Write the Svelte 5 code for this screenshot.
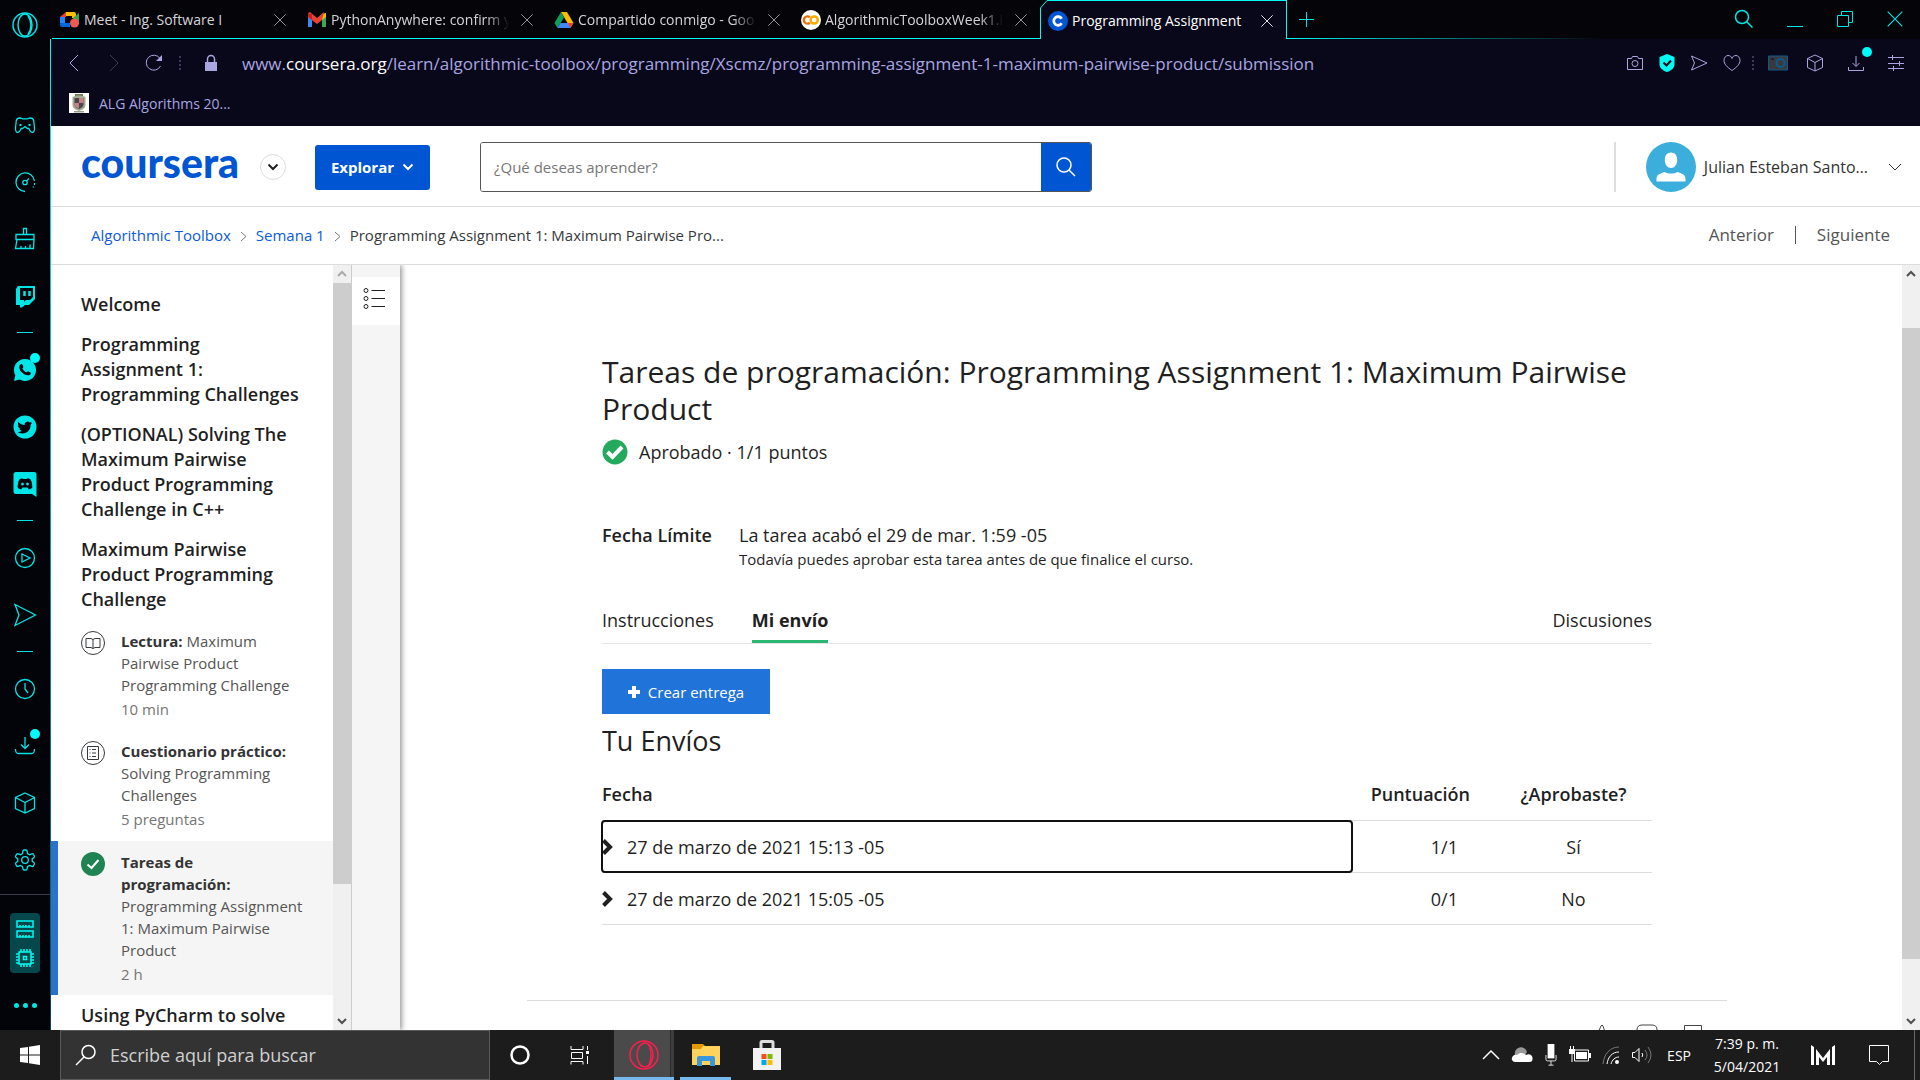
<script>
  const tabs = [
    { icon: 'meet', title: 'Meet - Ing. Software I' },
    { icon: 'gmail', title: 'PythonAnywhere: confirm y', fade: true },
    { icon: 'drive', title: 'Compartido conmigo - Goo', fade: true },
    { icon: 'colab', title: 'AlgorithmicToolboxWeek1.i', fade: true },
    { icon: 'coursera', title: 'Programming Assignment', active: true }
  ];

  const rail = ['gamepad', 'gauge', 'brush', 'twitch', '-', 'whatsapp', 'twitter', 'discord', '-', 'player', 'send', '-', 'clock', 'download', 'cube', 'gear'];

  const lessons = [
    'Welcome',
    'Programming Assignment 1: Programming Challenges',
    '(OPTIONAL) Solving The Maximum Pairwise Product Programming Challenge in C++',
    'Maximum Pairwise Product Programming Challenge'
  ];

  const items = [
    { icon: 'book', kind: 'Lectura:', name: 'Maximum Pairwise Product Programming Challenge', meta: '10 min' },
    { icon: 'quiz', kind: 'Cuestionario práctico:', name: 'Solving Programming Challenges', meta: '5 preguntas' },
    { icon: 'done', kind: 'Tareas de programación:', name: 'Programming Assignment 1: Maximum Pairwise Product', meta: '2 h', active: true }
  ];

  const rows = [
    { date: '27 de marzo de 2021 15:13 -05', score: '1/1', passed: 'Sí', focus: true },
    { date: '27 de marzo de 2021 15:05 -05', score: '0/1', passed: 'No' }
  ];
</script>

{#snippet favicon(name)}
  <svg width="20" height="20" viewBox="0 0 20 20">
    {#if name === 'meet'}
      <path d="M6 2h8a2 2 0 0 1 2 2v4h-4V6H6z" fill="#fbbc04" />
      <path d="M6 2v5H0z" fill="#ea4335" />
      <path d="M0 7h5v7H0z" fill="#2684fc" />
      <path d="M0 13h10v4H2a2 2 0 0 1-2-2z" fill="#0066da" />
      <path d="M13 8l6-5v11l-6-3z" fill="#34a853" />
      <circle cx="14.500" cy="13" r="4.500" fill="#ee5a52" />
    {:else if name === 'gmail'}
      <path d="M1 5v12h4V8z" fill="#4285f4" />
      <path d="M19 5v12h-4V8z" fill="#34a853" />
      <path d="M15 4l4-1v4l-4 3z" fill="#fbbc04" />
      <path d="M1 3l2-1 7 6 7-6-2 8-5 4-9-7z" fill="#ea4335" />
      <path d="M1 3v4l4 3V4z" fill="#c5221f" />
    {:else if name === 'drive'}
      <path d="M7 2h6l6.500 11h-6z" fill="#fbbc04" />
      <path d="M7 2l3 5.500L3.500 18 .5 13z" fill="#0f9d58" />
      <path d="M6.500 13h13l-3 5h-13z" fill="#4285f4" />
      <path d="M13.500 13h6l-3 5z" fill="#ea4335" />
    {:else if name === 'colab'}
      <circle cx="10" cy="10" r="10" fill="#fff" />
      <g fill="none" stroke-width="2.500">
        <path d="M8.800 7.300a3.600 3.600 0 1 0 0 5.400" stroke="#e8710a" />
        <circle cx="13.200" cy="10" r="3.600" stroke="#f9ab00" />
      </g>
    {:else}
      <circle cx="10" cy="10" r="10" fill="#0056d2" />
      <path d="M13.700 7.700a4.300 4.300 0 1 0 0 4.600" fill="none" stroke="#fff" stroke-width="2.800" />
    {/if}
  </svg>
{/snippet}

{#snippet cross(size)}
  <svg width={size} height={size} viewBox="0 0 16 16" class="line"><path d="M1.500 1.500l13 13M14.500 1.500l-13 13" /></svg>
{/snippet}

{#snippet railIcon(name)}
  <svg width="24" height="24" viewBox="0 0 24 24" class="line">
    {#if name === 'gamepad'}
      <path d="M7 5c-2 0-3.300.8-3.700 2.500L2.500 15c-.2 2.800.8 4.500 2.300 4.500 1.700 0 2.200-1.800 3.400-4h1.300l2.500-2 2.500 2h1.300c1.200 2.200 1.700 4 3.400 4 1.500 0 2.500-1.700 2.300-4.500l-.8-7.500C20.300 5.800 19 5 17 5c-1.500 0-1.600.8-2.400.8H9.400C8.600 5.800 8.500 5 7 5z" />
      <path d="M6.500 12h2M15.500 12h2" stroke-width="2" />
    {:else if name === 'gauge'}
      <path d="M12 21.500A9.300 9.300 0 1 1 21.500 11M21.500 13v2M20.500 16.500l-.6 1" /><circle cx="12" cy="12.500" r="2.200" /><path d="M13.600 10.900l2.400-2.400" />
    {:else if name === 'brush'}
      <path d="M3 7.500h18v5H3zM10.500 7.500V1.500h3v6M4 12.500L2.500 21.500h18l.5-9M8 21.500V19M12.500 21.500V19M17 21.500v-4" />
    {:else if name === 'twitch'}
      <path d="M3 5l2-3h17v13l-6 6h-4l-3 2.500H7V21H3zM7 4v12h4v2l2-2h4l3-3V4z" fill-rule="evenodd" class="fill" /><path d="M11.500 7v5M16.500 7v5" stroke-width="2.500" />
    {:else if name === 'whatsapp'}
      <path d="M12 1A11 11 0 0 0 2.300 17.300L1 23l5.700-1.400A11 11 0 1 0 12 1z" class="fill" />
      <path d="M7.500 6.500c1-.8 1.700-.5 2.100.5l.7 1.700c.2.600-.7 1.300-1 1.800 1 2 2.400 3.200 4.300 4.100.6-.5 1.200-1.500 1.800-1.200l2 1c.8.500.2 1.800-.8 2.500-2 1.200-5.500-.2-7.800-2.600C6.500 12 5.300 8.500 7.500 6.500z" class="ink" />
    {:else if name === 'twitter'}
      <circle cx="12" cy="12" r="11.500" class="fill" />
      <path d="M19 7.800c-.6.300-1.100.4-1.700.5.600-.4 1-.9 1.200-1.600-.6.300-1.200.6-1.900.7a3 3 0 0 0-5 2.700c-2.500-.1-4.700-1.300-6.200-3.100-.8 1.400-.4 3.100.9 4-.5 0-.9-.1-1.300-.4 0 1.400 1 2.700 2.400 3-.4.100-.9.100-1.300 0 .4 1.200 1.500 2 2.800 2.100A6 6 0 0 1 4.500 17c4 2.500 9.500 1.700 12-2.500.8-1.400 1.100-2.800 1.100-4.800.5-.5 1-1.100 1.400-1.900z" class="ink" />
    {:else if name === 'discord'}
      <path d="M3 0h18a2.500 2.500 0 0 1 2.500 2.500V25L19 22H3A2.500 2.500 0 0 1 .5 19.500v-17A2.500 2.500 0 0 1 3 0z" class="fill" />
      <path d="M8 6.500c1.500-.4 1.500.5 4 .5s2.500-.9 4-.5c2.200.8 3.300 4.500 3.300 9-1 1.500-3 2-3.800 1.500l-1-1.500h-5l-1 1.500c-.8.500-2.800 0-3.800-1.500 0-4.500 1.100-8.200 3.300-9z" class="ink" />
      <ellipse cx="9.500" cy="12" rx="1.400" ry="1.600" class="fill" /><ellipse cx="14.500" cy="12" rx="1.400" ry="1.600" class="fill" />
    {:else if name === 'player'}
      <circle cx="12" cy="12" r="9.500" /><path d="M9 8v8l8-4z" />
    {:else if name === 'send'}
      <path d="M2 1.500l20.500 10.500L2 22.500l4-10.500z" />
    {:else if name === 'clock'}
      <circle cx="12" cy="12" r="9.500" /><path d="M12 6v6l3 4" />
    {:else if name === 'download'}
      <path d="M12 3v11M8 10.500l4 4 4-4M2.500 15c0 4 1 4.500 3 4.500h13c2 0 3-.5 3-4.500" />
    {:else if name === 'cube'}
      <path d="M12 2l9.500 4.500v11L12 22l-9.500-4.500v-11zM2.500 6.500L12 11.500l9.500-5M12 11.500V22" />
    {:else if name === 'gear'}
      <path d="M10 3q0-1 1-1h2q1 0 1 1l.5 2.500 2 1.200 2.500-.9q1-.3 1.400.5l.9 1.600q.5.900-.3 1.600l-1.800 1.400v2.400l1.800 1.400q.8.700.3 1.600l-.9 1.600q-.5.800-1.400.5l-2.500-.9-2 1.200L14 21q0 1-1 1h-2q-1 0-1-1l-.5-2.300-2-1.200-2.500.9q-1 .3-1.400-.5l-.9-1.600q-.5-.9.300-1.600l1.800-1.400v-2.400L3 9.500q-.8-.7-.3-1.600l.9-1.600q.5-.8 1.400-.5l2.500.9 2-1.200z" /><circle cx="12" cy="12" r="3.300" />
    {/if}
  </svg>
{/snippet}

{#snippet caret(up)}
  <svg width="10" height="8" viewBox="0 0 10 8" class="line heavy"><path d={up ? 'M1 6l4-4 4 4' : 'M1 2l4 4 4-4'} /></svg>
{/snippet}

<div class="screen">
  <aside class="rail">
    <div class="opera">
      <svg width="26" height="26" viewBox="0 0 26 26" class="line thick"><circle cx="13" cy="13" r="12" /><ellipse cx="13" cy="13" rx="7" ry="11" /><path d="M16 4c4 5 4 13 0 18" /></svg>
    </div>
    {#each rail as name}
      {#if name === '-'}
        <div class="dash"></div>
      {:else}
        <button class="slot" aria-label={name}>
          {@render railIcon(name)}
          {#if name === 'whatsapp' || name === 'download'}<i class="dot"></i>{/if}
        </button>
      {/if}
    {/each}
    <div class="rail-end">
      <button class="limiter" aria-label="Limitadores">
        <svg width="20" height="20" viewBox="0 0 20 20" class="line thick"><path d="M2 2h16v6H2zM2 12h16v6H2zM5 8V6M8 8V6M11 8V6M14 8V6M5 18v-2M8 18v-2M11 18v-2M14 18v-2" /></svg>
        <svg width="20" height="20" viewBox="0 0 20 20" class="line thick"><path d="M4 4h12v12H4zM8.500 8.500h3v3h-3zM6 4V1M9 4V1M12 4V1M15 4V1M6 19v-3M9 19v-3M12 19v-3M15 19v-3M1 6h3M1 9h3M1 12h3M1 15h3M16 6h3M16 9h3M16 12h3M16 15h3" /></svg>
      </button>
      <button class="more" aria-label="Más"><i></i><i></i><i></i></button>
    </div>
  </aside>

  <div class="window">
    <div class="tabbar">
      <div class="tabs">
        {#each tabs as tab}
          <div class="tab" class:active={tab.active}>
            {#if tab.active}
              <svg class="edge" width="8" height="39" viewBox="0 0 8 39"><path d="M0 0h8L.5 7.500V39H0z" fill="#050509" /><path d="M8 .5h-1L.5 8v31" fill="none" stroke="#00fbf4" /></svg>
            {/if}
            {@render favicon(tab.icon)}
            <span class="tab-title" class:fade={tab.fade}>{tab.title}</span>
            <button class="tab-close" aria-label="Cerrar pestaña">{@render cross(14)}</button>
          </div>
        {/each}
      </div>
      <div class="tab-rest">
        <button aria-label="Nueva pestaña"><svg width="16" height="16" viewBox="0 0 16 16" class="line"><path d="M8.500 1v15M1 8.500h15" /></svg></button>
        <div class="win">
          <button aria-label="Buscar"><svg width="20" height="20" viewBox="0 0 20 20" class="line thick"><circle cx="8" cy="8" r="6.500" /><path d="M12.500 12.500l6 6" /></svg></button>
          <button aria-label="Minimizar"><svg width="18" height="18" viewBox="0 0 18 18" class="line"><path d="M1 16.500h16" /></svg></button>
          <button aria-label="Restaurar"><svg width="18" height="18" viewBox="0 0 18 18" class="line"><path d="M1.500 5.500h11v11h-11zM5.500 5.500v-4h11v11h-4" /></svg></button>
          <button aria-label="Cerrar">{@render cross(18)}</button>
        </div>
      </div>
    </div>

    <div class="nav">
      <div class="address">
        <button class="nb" aria-label="Atrás"><svg width="12" height="18" viewBox="0 0 12 18" class="line"><path d="M10 1L2 9l8 8" /></svg></button>
        <button class="nb dim" aria-label="Adelante"><svg width="12" height="18" viewBox="0 0 12 18" class="line"><path d="M2 1l8 8-8 8" /></svg></button>
        <button class="nb reload" aria-label="Recargar"><svg width="18" height="18" viewBox="0 0 18 18" class="line"><path d="M15.500 12A7.500 7.500 0 1 1 15 4.500" /><path d="M17 1v6h-6z" class="fill" /></svg></button>
        <i class="sep"></i>
        <svg class="lock" width="14" height="18" viewBox="0 0 14 18"><path d="M1 8h12v9H1z" fill="#a8a5e0" /><path d="M3.500 8V5a3.500 3.500 0 0 1 7 0v3" fill="none" stroke="#a8a5e0" stroke-width="1.500" /></svg>
        <div class="url">www.<b>coursera.org</b>/learn/algorithmic-toolbox/programming/Xscmz/programming-assignment-1-maximum-pairwise-product/submission</div>
        <div class="tools">
          <svg width="18" height="18" viewBox="0 0 18 18" class="line"><path d="M1.500 4.500h4l1-2h5l1 2h4v11h-15z" /><circle cx="9" cy="9.500" r="3" /></svg>
          <svg width="16" height="18" viewBox="0 0 16 18"><path d="M8 0l7.500 3v7c0 4-3 6.500-7.500 8C3.500 16.500.5 14 .5 10V3z" fill="#00fbf4" /><path d="M4.500 8.500l3 3 4.500-5" fill="none" stroke="#08081a" stroke-width="2" /></svg>
          <svg width="18" height="18" viewBox="0 0 18 18" class="line"><path d="M1.500 2L17 9 1.500 16l3-7z" /></svg>
          <svg width="18" height="18" viewBox="0 0 18 18" class="line"><path d="M9 16.500C4 13 1 10 1 6.500 1 3.500 3 1.500 5 1.500c2 0 3.500 1 4 3 .5-2 2-3 4-3s4 2 4 5c0 3.500-3 6.500-8 10z" /></svg>
          <i class="sep"></i>
          <svg width="20" height="16" viewBox="0 0 20 16"><path d="M.5 1h19v14H.5z" fill="#3a3a3c" stroke="#0d5a8c" /><circle cx="12.500" cy="8" r="4" fill="#3a3a3c" stroke="#0d5a8c" stroke-width="2" /><path d="M3 4h3" stroke="#15293c" stroke-width="2" /></svg>
          <svg width="18" height="18" viewBox="0 0 18 18" class="line"><path d="M9 1l7.500 3.500v9L9 17l-7.500-3.500v-9zM1.500 4.500L9 8.500l7.500-4M9 8.500V17" /></svg>
          <span class="badge"><svg width="18" height="18" viewBox="0 0 18 18" class="line"><path d="M9 2v10M5.500 9L9 12.500 12.500 9M1.500 13v3.500h15V13" /></svg><i class="dot"></i></span>
          <svg width="18" height="18" viewBox="0 0 18 18" class="line"><path d="M1 3.500h16M1 9.500h16M1 14.500h16M5.500 1v5M12.500 7v5M6.500 12v5" /></svg>
        </div>
      </div>
      <a class="bookmark" href="#bookmark">
        <svg width="20" height="20" viewBox="0 0 20 20"><path d="M0 0h20v20H0z" fill="#fff" /><path d="M6 1h8v3H6z" fill="#6f7d54" /><path d="M3.500 4c4-2 9-2 13 0v8c0 3-3 5-6.500 6-3.500-1-6.500-3-6.500-6z" fill="#a5aa90" /><path d="M5.500 5h9v6.500c0 2-2 3.500-4.500 4.500-2.500-1-4.500-2.500-4.500-4.500z" fill="#4a4650" /><path d="M10 5h4.500v5H10zM5.500 10H10v5.500c-2.500-1-4.500-2-4.500-4z" fill="#c98080" /><path d="M5 18h10v1.500H5z" fill="#9a9a8c" /></svg>
        ALG Algorithms 20...
      </a>
    </div>

    <header class="top">
      <a class="logo" href="#home">coursera</a>
      <button class="round" aria-label="Abrir menú"><svg width="12" height="8" viewBox="0 0 12 8" class="line heavy"><path d="M1.500 1.500L6 6l4.500-4.500" /></svg></button>
      <button class="explore">Explorar <svg width="12" height="8" viewBox="0 0 12 8" class="line heavy"><path d="M1.500 1.500L6 6l4.500-4.500" /></svg></button>
      <form class="search">
        <input type="text" placeholder="¿Qué deseas aprender?" aria-label="¿Qué deseas aprender?" />
        <button type="button" aria-label="Buscar"><svg width="20" height="20" viewBox="0 0 20 20" class="line thick"><circle cx="8" cy="8" r="7" /><path d="M13 13l6 6" /></svg></button>
      </form>
      <div class="user">
        <svg width="50" height="50" viewBox="0 0 50 50"><circle cx="25" cy="25" r="25" fill="#3caedb" /><path d="M25 10.500c4 0 6.200 3 6.200 7.500S28.500 26 25 26s-6.200-3.500-6.200-8 2.200-7.500 6.200-7.500zM10.500 39.500v-3c0-4 4-5 8-6.500 4 2 9 2 13 0 4 1.500 8 2.500 8 6.500v3z" fill="#fff" /></svg>
        <button class="name">Julian Esteban Santo… <svg width="14" height="8" viewBox="0 0 14 8" class="line"><path d="M1 1l6 6 6-6" /></svg></button>
      </div>
    </header>

    <nav class="crumbs">
      <a href="#course">Algorithmic Toolbox</a>
      <svg width="7" height="10" viewBox="0 0 7 10" class="line"><path d="M1 1l5 4.500L1 10" /></svg>
      <a href="#week">Semana 1</a>
      <svg width="7" height="10" viewBox="0 0 7 10" class="line"><path d="M1 1l5 4.500L1 10" /></svg>
      <span>Programming Assignment 1: Maximum Pairwise Pro...</span>
      <div class="pager"><a href="#prev">Anterior</a><i></i><a href="#next">Siguiente</a></div>
    </nav>

    <div class="body">
      <div class="outline">
        {#each lessons as title}<h3>{title}</h3>{/each}
        {#each items as item}
          <a class="item" class:current={item.active} href="#item">
            <svg width="24" height="24" viewBox="0 0 24 24" class="line">
              {#if item.icon === 'book'}
                <circle cx="12" cy="12" r="11.500" /><path d="M5 7.500h5l2 1 2-1h5v9h-5l-2 1-2-1H5zM12 8.500v9" />
              {:else if item.icon === 'quiz'}
                <circle cx="12" cy="12" r="11.500" /><path d="M6.500 5.500h11v13h-11zM11 8.500h4M11 12h4M11 15.500h4M8.500 8.500h1M8.500 12h1M8.500 15.500h1" />
              {:else}
                <circle cx="12" cy="12" r="12" fill="#1f8354" stroke="none" /><path d="M6.500 12.500l4 3.500L17.500 8" stroke="#fff" stroke-width="2" />
              {/if}
            </svg>
            <span class="item-text"><span><b>{item.kind}</b> {item.name}</span><small>{item.meta}</small></span>
          </a>
        {/each}
        <h3>Using PyCharm to solve</h3>
      </div>
      <div class="scroll left"><span class="faint">{@render caret(true)}</span><div class="thumb long"></div><div class="rest"></div><span>{@render caret(false)}</span></div>
      <div class="strip">
        <button aria-label="Esquema"><svg width="22" height="22" viewBox="0 0 22 22" class="line"><circle cx="3" cy="3.500" r="2" /><circle cx="3" cy="11.500" r="2" /><circle cx="3" cy="19.500" r="2" /><path d="M8.500 3.500H22M8.500 11.500H22M8.500 19.500H22" /></svg></button>
      </div>

      <main>
        <div class="page">
          <article>
            <h1>Tareas de programación: Programming Assignment 1: Maximum Pairwise Product</h1>
            <p class="status"><svg width="26" height="26" viewBox="0 0 26 26"><circle cx="13" cy="13" r="12.500" fill="#25a95d" /><path d="M5.500 13l5 5L20 8" fill="none" stroke="#fff" stroke-width="4" /></svg>Aprobado · 1/1 puntos</p>
            <div class="due"><b>Fecha Límite</b><div>La tarea acabó el 29 de mar. 1:59 -05<small>Todavía puedes aprobar esta tarea antes de que finalice el curso.</small></div></div>
            <div class="views"><a href="#instructions">Instrucciones</a><a class="on" href="#mine">Mi envío</a><a class="end" href="#forum">Discusiones</a></div>
            <button class="create"><svg width="12" height="12" viewBox="0 0 12 12"><path d="M6 0v12M0 6h12" stroke="#fff" stroke-width="4" /></svg>Crear entrega</button>
            <h2>Tu Envíos</h2>
            <table>
              <thead><tr><th>Fecha</th><th class="score">Puntuación</th><th class="passed">¿Aprobaste?</th></tr></thead>
              <tbody>
                {#each rows as row}
                  <tr>
                    <td><button class="date" class:focus={row.focus}><svg width="12" height="18" viewBox="0 0 12 18"><path d="M1.500 2.500L8 9l-6.500 6.500" fill="none" stroke="#1f1f1f" stroke-width="4" /></svg>{row.date}</button></td>
                    <td class="score">{row.score}</td>
                    <td class="passed">{row.passed}</td>
                  </tr>
                {/each}
              </tbody>
            </table>
          </article>
          <footer>
            <svg width="24" height="24" viewBox="0 0 24 24" class="line"><path d="M2 12h6l4-9q1-2 2 0l3 9v11H8" /></svg>
            <svg width="24" height="24" viewBox="0 0 24 24" class="line"><path d="M2 7q0-5 5-5h10q5 0 5 5v12q0 4-5 4H7q-5 0-5-4z" /></svg>
            <svg width="24" height="24" viewBox="0 0 24 24" class="line"><path d="M3.500 23V2.500h17V23" /></svg>
          </footer>
        </div>
      </main>
      <div class="scroll"><span>{@render caret(true)}</span><div class="before"></div><div class="thumb mid"></div><div class="after"></div><span>{@render caret(false)}</span></div>
    </div>
  </div>

  <div class="taskbar">
    <button class="start" aria-label="Inicio"><svg width="20" height="20" viewBox="0 0 20 20"><path d="M0 3l8-1v7.500H0zM9 1.800L20 0v9.500H9zM0 10.500h8V18l-8-1zM9 10.500h11V20L9 18.200z" fill="#fff" /></svg></button>
    <label class="find">
      <svg width="22" height="22" viewBox="0 0 22 22" class="line thick"><circle cx="13.500" cy="8" r="6.500" /><path d="M9 13l-8 8" /></svg>
      <input type="text" placeholder="Escribe aquí para buscar" />
    </label>
    <button class="app" aria-label="Cortana"><svg width="20" height="20" viewBox="0 0 20 20"><circle cx="10" cy="10" r="8.500" fill="none" stroke="#fff" stroke-width="2.500" /></svg></button>
    <button class="app" aria-label="Vista de tareas"><svg width="20" height="20" viewBox="0 0 20 20" class="line"><path d="M1 1v3.500h12V1M1.500 7.500h11v6h-11zM1 19.500V16.500h12v3M17.500 1v4M17.500 11v8" /><path d="M16 6h3v3h-3z" class="fill" /></svg></button>
    <button class="app run opera-app" aria-label="Opera"><svg width="30" height="30" viewBox="0 0 30 30" class="line thick"><circle cx="15" cy="15" r="14" /><ellipse cx="16" cy="15" rx="8" ry="12" /><path d="M19 4c4 5 4 17 0 22" /></svg></button>
    <button class="app run files" aria-label="Explorador"><svg width="28" height="24" viewBox="0 0 28 24"><path d="M0 1h11l3 3-3 3H0z" fill="#e59b00" /><path d="M11 3h17v19H0V6h9z" fill="#ffd35c" /><path d="M5 23v-8q0-2 2-2h14q2 0 2 2v8h-5v-5h-8v5z" fill="#3a96dd" /></svg></button>
    <button class="app" aria-label="Tienda"><svg width="30" height="30" viewBox="0 0 30 30"><path d="M9 9V2.500q0-1 1-1h10q1 0 1 1V9" fill="none" stroke="#ddd" stroke-width="3" /><path d="M1 8h28v22H1z" fill="#f2f2f2" /><path d="M9.500 14h5v5h-5z" fill="#f25022" /><path d="M15.500 14h5v5h-5z" fill="#7fba00" /><path d="M9.500 20h5v5h-5z" fill="#00a4ef" /><path d="M15.500 20h5v5h-5z" fill="#ffb900" /></svg></button>
    <div class="tray">
      <svg width="18" height="10" viewBox="0 0 18 10" class="line thick"><path d="M1 9l8-8 8 8" /></svg>
      <svg width="22" height="18" viewBox="0 0 22 18"><path d="M4 9a6 6 0 0 1 12-3l-6 9z" fill="#999" /><path d="M1 14a4 4 0 0 1 5-5c3-3 7-2 9 0 4-2 7 1 6.500 4 0 2-1 3-3 3H4q-2 0-3-2z" fill="#fff" /></svg>
      <svg width="14" height="22" viewBox="0 0 14 26"><path d="M3 0h8v17H3z" fill="#fff" /><path d="M1 13v5q0 2 2 2h8q2 0 2-2v-5M7 20v5M4 25h6" fill="none" stroke="#fff" /></svg>
      <svg width="22" height="18" viewBox="0 0 22 18"><path d="M5.500 4h14v11h-14z" fill="none" stroke="#fff" /><path d="M7 6h11v7H7zM20 7h2v5h-2zM0 3h6v5H0z" fill="#fff" /><path d="M1.500 0v3M4.500 0v3M3 8v8" stroke="#fff" /></svg>
      <svg width="18" height="20" viewBox="0 0 18 20" class="line"><path d="M1 19C2 9 8 2 17 2" stroke="#777" /><path d="M5 19c1-7 5-12 12-12M9 19c1-4 4-7 8-7" /><circle cx="15" cy="17" r="2" class="fill" /></svg>
      <svg width="22" height="20" viewBox="0 0 22 20" class="line"><path d="M1.500 7.500H4l4-4v13l-4-4H1.500zM11 8q1.500 2 0 4" /><path d="M14 5q4 5 0 10M17 2q6 8 0 16" stroke="#777" /></svg>
      <span class="lang">ESP</span>
      <div class="clock"><span>7:39 p. m.</span><span>5/04/2021</span></div>
      <svg width="24" height="20" viewBox="0 0 24 20"><path d="M0 0l3 2v18H0zM24 0l-3 2v18h3zM5 4l7 9 7-9v16h-3v-8l-4 5-4-5v8H5z" fill="#fff" /></svg>
      <svg class="notes line" width="22" height="22" viewBox="0 0 22 22"><path d="M1.500 1.500h19v16h-6l-3 3-3-3h-7z" /></svg>
      <i class="peek"></i>
    </div>
  </div>
</div>

<style>
  :global(body) { background: #000; }
  * { box-sizing: border-box; }
  button { border: 0; padding: 0; background: none; color: inherit; font: inherit; display: flex; align-items: center; justify-content: center; cursor: pointer; }
  a { color: inherit; text-decoration: none; }
  h1, h2, h3, p { margin: 0; font-weight: 400; }
  svg { display: block; flex: none; overflow: visible; }
  .line { fill: none; stroke: currentColor; stroke-width: 1; }
  .thick { stroke-width: 1.5; }
  .heavy { stroke-width: 2; }
  .fill { fill: currentColor; stroke: none; }
  .ink { fill: #03030a; stroke: none; }

  .screen { height: 100vh; display: grid; grid-template: minmax(0, 1fr) 50px / 50px minmax(0, 1fr); overflow: hidden; font-family: "Open Sans", "Noto Sans", sans-serif; color: #1f1f1f; }

  .rail { display: flex; flex-direction: column; align-items: center; background: #03030a; color: #00e5e5; overflow: hidden; }
  .opera { height: 96px; padding-top: 12px; flex: none; }
  .slot { position: relative; width: 50px; height: 57px; flex: none; }
  .slot svg { stroke-width: 1.3; }
  .dash { height: 17px; flex: none; display: flex; align-items: center; }
  .dash::after { content: ""; width: 16px; height: 1px; background: currentColor; }
  .dot { position: absolute; top: 12px; right: 10px; width: 10px; height: 10px; border-radius: 50%; background: #00fbfb; }
  .rail-end { width: 100%; margin-top: 6px; padding-top: 18px; border-top: 1px solid #3a3d48; display: flex; flex-direction: column; align-items: center; gap: 26px; }
  .limiter { flex-direction: column; gap: 9px; width: 30px; height: 60px; border-radius: 4px; background: #05474b; color: #00fbf4; }
  .more { gap: 4px; height: 12px; }
  .more i { width: 5px; height: 5px; border-radius: 50%; background: currentColor; }

  .window { display: flex; flex-direction: column; min-width: 0; background: #fff; border-left: 1px solid; border-image: linear-gradient(#050509 38px, #00fbf4 38px, #00c4c4 30%, #034b50) 1; }
  .tabbar { height: 39px; display: flex; flex: none; background: #050509; color: #d4d4d8; font-size: 14px; margin-left: -1px; padding-left: 2px; }
  .tabs { display: flex; }
  .tab { position: relative; width: 247px; display: flex; align-items: center; gap: 4px; padding: 1px 11px 0 8px; border-bottom: 1px solid #00fbf4; }
  .tab-title { flex: 1; white-space: nowrap; }
  .fade { mask-image: linear-gradient(90deg, #000 84%, transparent 97%); }
  .tab-close { width: 16px; color: #aaa; }
  .active { background: #08081a; color: #fff; border: solid #00fbf4; border-width: 1px 1px 0 0; }
  .active .tab-close { color: #fff; }
  .edge { position: absolute; left: 0; top: -1px; }
  .tab-rest { flex: 1; display: flex; align-items: center; justify-content: space-between; padding: 0 16px 1px 11px; color: #00e5e5; border-bottom: 1px solid; border-image: linear-gradient(90deg, #00fbf4, transparent 50%) 1; }
  .win { display: flex; gap: 32px; }

  .nav { height: 87px; flex: none; background: #08081a; color: #a8a5e0; }
  .address { display: flex; align-items: center; height: 48px; padding: 0 15px 0 17px; }
  .nb { width: 12px; margin-right: 28px; }
  .dim { color: #3b3a58; margin-right: 25px; }
  .reload { width: 18px; margin-right: 16px; }
  .sep { height: 14px; border-left: 2px dotted #3b3a58; }
  .lock { margin: 0 24px 0 23px; }
  .url { font-size: 17px; white-space: nowrap; }
  .url b { font-weight: 400; color: #fff; }
  .tools { margin-left: auto; display: flex; align-items: center; gap: 15px; }
  .tools .sep { margin: 0 -4px 0 -4px; }
  .tools .sep ~ svg { margin-left: 3px; }
  .badge { position: relative; margin: 0 4px 0 8px; }
  .badge .dot { top: -7px; right: -7px; }
  .bookmark { display: flex; align-items: center; gap: 10px; height: 32px; padding-left: 18px; font-size: 14px; }

  .top { height: 81px; flex: none; display: flex; align-items: center; padding: 2px 18px 0 30px; border-bottom: 1px solid #ddd; }
  .logo { font: 900 41px/50px Lato, sans-serif; color: #0056d2; width: 160px; padding-bottom: 8px; }
  .round { width: 26px; height: 26px; border: 1px solid #ddd; border-radius: 50%; margin: 0 29px 0 19px; }
  .explore { height: 45px; width: 115px; gap: 8px; border-radius: 3px; background: #0056d2; color: #fff; font-weight: 700; font-size: 15px; }
  .search { display: flex; width: 612px; height: 50px; margin-left: 50px; border: 1px solid #555; border-radius: 3px; overflow: hidden; }
  .search input { flex: 1; border: 0; padding: 0 13px; font: 15px "Open Sans", sans-serif; outline: 0; min-width: 0; }
  .search input::placeholder { color: #777; }
  .search button { width: 50px; background: #0056d2; color: #fff; }
  .user { margin-left: auto; display: flex; align-items: center; padding-left: 30px; border-left: 2px solid #ddd; gap: 8px; }
  .name { gap: 20px; font-size: 16px; white-space: nowrap; color: #333; }

  .crumbs { height: 58px; flex: none; display: flex; align-items: center; gap: 9px; padding: 0 30px 2px 40px; border-bottom: 1px solid #ddd; font-size: 15px; color: #373a3c; }
  .crumbs > a { color: #0b5cdb; }
  .crumbs svg { color: #777; margin-top: 2px; }
  .pager { margin-left: auto; display: flex; align-items: center; gap: 21px; font-size: 17px; color: #555; }
  .pager i { height: 18px; border-left: 1px solid #555; }

  .body { flex: 1; min-height: 0; display: flex; }
  .outline { width: 282px; flex: none; padding-top: 20px; overflow: hidden; }
  h3 { padding: 7px 30px 8px; font-size: 18px; line-height: 25px; font-weight: 600; }
  .item { display: flex; gap: 16px; padding: 10px 28px 10px 30px; font-size: 15px; line-height: 22px; color: #555; }
  .item > svg { margin-top: 1px; color: #373a3c; }
  .item b { color: #333; font-weight: 700; }
  .item-text { display: flex; flex-direction: column; gap: 2px; }
  .item small { font-size: 15px; color: #757575; }
  .current { margin: 1px 0; background: #f5f5f5; border-left: 7px solid #2a73cc; padding-left: 23px; }

  .scroll { width: 18px; flex: none; display: flex; flex-direction: column; background: #f0f0f0; color: #505050; }
  .scroll.left { width: 19px; border-right: 1px solid #cdcdcd; }
  .scroll span { height: 18px; flex: none; display: flex; align-items: center; justify-content: center; }
  .faint { color: #aaa; }
  .thumb { background: #cdcdcd; }
  .long { flex: 601; }
  .rest { flex: 128; }
  .before { flex: 45; }
  .mid { flex: 631; }
  .after { flex: 53; }
  .strip { width: 48px; flex: none; padding-top: 12px; background: #f5f5f5; box-shadow: 2px 0 5px #0006; clip-path: inset(0 -8px 0 0); }
  .strip button { width: 48px; height: 48px; padding: 0 4px 6px 0; background: #fff; }

  main { flex: 1; min-width: 0; padding-right: 48px; overflow: hidden; }
  .page { max-width: 1200px; margin: 0 auto; }
  article { padding: 88px 75px 75px; border-bottom: 1px solid #ddd; font-size: 18px; line-height: 26px; }
  h1 { font-size: 30px; line-height: 37px; }
  .status { display: flex; gap: 11px; margin-top: 12px; }
  .due { display: flex; gap: 26px; margin-top: 57px; }
  .due b { font-weight: 600; width: 111px; }
  .due small { display: block; font-size: 15px; line-height: 22px; }
  .views { display: flex; gap: 38px; margin-top: 37px; border-bottom: 1px solid #e5e5e5; }
  .views a { padding-bottom: 7px; border-bottom: 3px solid transparent; }
  .views .on { font-weight: 700; border-color: #2ab673; }
  .views .end { margin-left: auto; }
  .create { width: 168px; height: 45px; margin-top: 25px; gap: 8px; background: #2073d8; color: #fff; font-size: 15px; }
  h2 { font-size: 27px; line-height: 36px; margin-top: 9px; }
  table { width: 100%; table-layout: fixed; border-collapse: collapse; }
  th { padding: 22px 0 13px; font-weight: 600; text-align: left; }
  td { height: 52px; padding: 0; border-top: 1px solid #ddd; border-bottom: 1px solid #ddd; }
  .score { width: 143px; text-align: right; }
  th.score { padding-right: 25px; }
  td.score { padding-right: 37px; }
  .passed { width: 157px; text-align: center; }
  th.score, th.passed { white-space: nowrap; }
  .date { width: 100%; height: 51px; justify-content: flex-start; gap: 13px; }
  .focus { outline: 2px solid #101010; outline-offset: -1px; border-radius: 3px; }
  footer { display: flex; justify-content: flex-end; gap: 22px; padding: 22px 22px 0; color: #444; }

  .taskbar { grid-column: 1 / -1; display: flex; background: #1c1c1c; color: #fff; }
  .start { width: 60px; }
  .find { width: 430px; display: flex; align-items: center; gap: 13px; padding-left: 14px; background: #333; border: 1px solid #5a5a5a; }
  .find input { flex: 1; min-width: 0; border: 0; padding: 0; background: none; font: 18px "Open Sans", sans-serif; outline: 0; }
  .find input::placeholder { color: #d0d0d0; }
  .app { width: 60px; border-bottom: 3px solid transparent; padding-top: 3px; }
  .run { border-color: #76b9ed; }
  .opera-app { background: linear-gradient(90deg, #4a4a4a 56px, #2a2a2a 56px, #2a2a2a 57px, #3d3d3d 57px); color: #fa1e4e; margin-left: 4px; }
  .files { width: 51px; margin: 0 6px; }
  .tray { margin-left: auto; display: flex; align-items: center; gap: 11px; }
  .lang { font-size: 14px; margin-left: 3px; }
  .clock { width: 90px; margin-right: 8px; display: flex; flex-direction: column; align-items: center; font-size: 14px; line-height: 23px; }
  .notes { margin-left: 22px; }
  .peek { height: 50px; width: 6px; border-left: 1px solid #666; margin-left: 13px; }
</style>
